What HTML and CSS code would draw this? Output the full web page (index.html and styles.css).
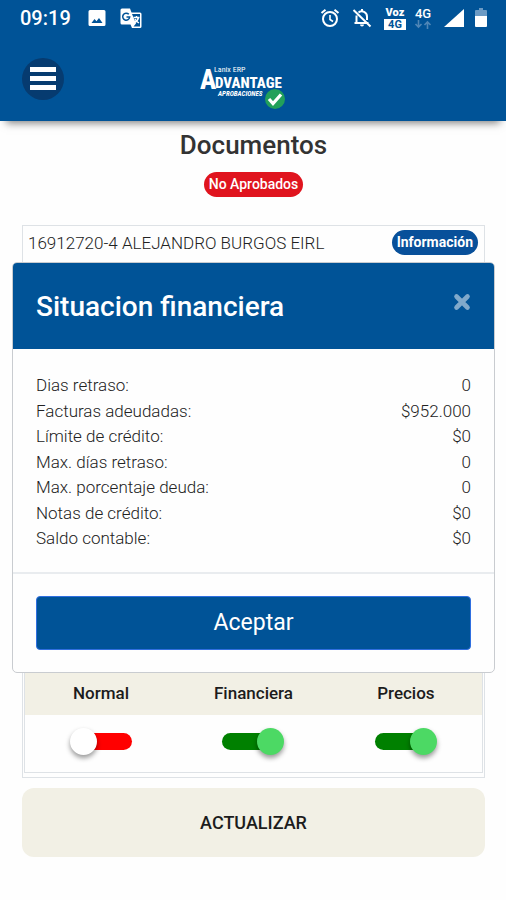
FILE: index.html
```html
<!DOCTYPE html>
<html lang="es">
<head>
  <meta charset="UTF-8" />
  <meta name="viewport" content="width=device-width, initial-scale=1.0"/>
  <title>Advantage Aprobaciones</title>
  <link rel="stylesheet" href="styles.css">
</head>
<body>
  <header class="topbar">
    <!-- Status bar -->
    <div class="status">
      <span class="time">09:19</span>
      <svg class="ic-image" width="18" height="18" viewBox="0 0 18 18"><path fill="#fff" fill-rule="evenodd" d="M2 1h14a1.500 1.500 0 0 1 1.500 1.500v13A1.500 1.500 0 0 1 16 17H2a1.500 1.500 0 0 1-1.500-1.500v-13A1.500 1.500 0 0 1 2 1zM3.500 14h11L11 9l-2.500 3.200-2-2.200z"/></svg>
      <svg class="ic-translate" width="22" height="21" viewBox="0 0 22 21">
        <path fill="#fff" d="M2 .5h8l1.500 4H20a1.500 1.500 0 0 1 1.500 1.500v12.500A1.500 1.500 0 0 1 20 20h-8l-1.500-3.500H2A1.500 1.500 0 0 1 .5 15V2A1.500 1.500 0 0 1 2 .5z"/>
        <path fill="#005397" d="M12 6h8v12.500h-6.500l2.500-3z"/>
        <path fill="none" stroke="#fff" stroke-width="1.400" d="M13.500 9.500h6M16.500 8v1.500M18.500 9.500c-.5 2.500-2 4-4 5M15 11c.8 1.800 2.200 3 4 4"/>
        <path fill="none" stroke="#005397" stroke-width="1.500" d="M8.800 6.300a3.500 3.500 0 1 0 .9 2.700H6.500"/>
      </svg>
      <span class="spacer"></span>
      <svg class="ic-alarm" width="20" height="20" viewBox="0 0 20 20" fill="none" stroke="#fff" stroke-width="2"><circle cx="10" cy="11" r="7"/><path d="M1.500 5l4-3.300M18.500 5l-4-3.300"/><path stroke-width="1.600" d="M10 7v4.500l3 2"/></svg>
      <svg class="ic-bell" width="20" height="20" viewBox="0 0 20 20"><path fill="none" stroke="#fff" stroke-width="2" d="M4.500 7.500v7.500h11M2.500 15h14M6.500 4.500C10 2 15 4 15 8.500v3.500M10 1v3M1.500 2l17 16.500"/><path fill="#fff" d="M8 16.500h4a2 2 0 0 1-4 0z"/></svg>
      <span class="volte"><b>Voz</b><i>4G</i></span>
      <span class="net">4G
        <svg width="18" height="9" viewBox="0 0 18 9" fill="none" stroke="#4f86b6" stroke-width="1.600"><path d="M4.500 0v7M1.500 4l3 3 3-3M13.500 9V2M10.500 5l3-3 3 3"/></svg>
      </span>
      <svg class="ic-signal" width="22" height="20" viewBox="0 0 22 20"><path fill="#fff" d="M21 1v18H1z"/></svg>
      <svg class="ic-battery" width="12" height="20" viewBox="0 0 12 20"><path fill="#6b9ac4" d="M4 0h4v2h3a1 1 0 0 1 1 1v6H0V3a1 1 0 0 1 1-1h3z"/><path fill="#fff" d="M0 8h12v10a1 1 0 0 1-1 1H1a1 1 0 0 1-1-1z"/></svg>
    </div>

    <!-- Menu and logo -->
    <div class="navbar">
      <button class="menu-btn" aria-label="Menú"><span></span><span></span><span></span></button>
      <svg class="logo" width="106" height="60" viewBox="0 0 106 60">
        <text class="logo-small" x="14" y="23">Lanix ERP</text>
        <text class="logo-cap" x="0" y="40">A</text>
        <text class="logo-big" x="15" y="39">DVANTAGE</text>
        <text class="logo-sub" x="18" y="47">APROBACIONES</text>
        <circle cx="75" cy="50" r="10" fill="#22a05a"/>
        <path d="M69 50l4 4.500 8-9" fill="none" stroke="#fff" stroke-width="3.200"/>
      </svg>
    </div>
  </header>

  <main class="content">
    <h1>Documentos</h1>
    <span class="badge badge-red">No Aprobados</span>

    <section class="card">
      <div class="card-head">
        <span>16912720-4 ALEJANDRO BURGOS EIRL</span>
        <button class="badge badge-blue">Información</button>
      </div>
      <table class="approvals">
        <thead>
          <tr>
            <th id="normal">Normal</th>
            <th id="financiera">Financiera</th>
            <th id="precios">Precios</th>
          </tr>
        </thead>
        <tbody>
          <tr>
            <td><input type="checkbox" class="toggle" aria-labelledby="normal"></td>
            <td><input type="checkbox" class="toggle" aria-labelledby="financiera" checked></td>
            <td><input type="checkbox" class="toggle" aria-labelledby="precios" checked></td>
          </tr>
        </tbody>
      </table>
    </section>

    <button class="update-btn">ACTUALIZAR</button>
  </main>

  <!-- Modal -->
  <div class="overlay">
    <div class="modal" role="dialog" aria-labelledby="modalTitle">
      <div class="modal-header">
        <h2 id="modalTitle">Situacion financiera</h2>
        <button class="close-btn" aria-label="Cerrar">
          <svg width="18" height="18" viewBox="0 0 18 18"><path d="M3.500 3.500l11 11M14.500 3.500l-11 11" stroke="#80a9cb" stroke-width="4.600" stroke-linecap="round"/></svg>
        </button>
      </div>
      <dl class="modal-body">
        <div><dt>Dias retraso:</dt><dd>0</dd></div>
        <div><dt>Facturas adeudadas:</dt><dd>$952.000</dd></div>
        <div><dt>Límite de crédito:</dt><dd>$0</dd></div>
        <div><dt>Max. días retraso:</dt><dd>0</dd></div>
        <div><dt>Max. porcentaje deuda:</dt><dd>0</dd></div>
        <div><dt>Notas de crédito:</dt><dd>$0</dd></div>
        <div><dt>Saldo contable:</dt><dd>$0</dd></div>
      </dl>
      <div class="modal-footer">
        <button class="accept-btn">Aceptar</button>
      </div>
    </div>
  </div>
</body>
</html>
```
FILE: styles.css
```css
* {
  box-sizing: border-box;
  margin: 0;
  padding: 0;
}

body {
  position: relative;
  display: flex;
  flex-direction: column;
  min-height: 100vh;
  background: #fefefe;
  color: #222;
  font-family: Roboto, sans-serif;
  font-size: 17px;
}

button {
  border: none;
  font-family: inherit;
  cursor: pointer;
}

/* Header */
.topbar {
  background: #005397;
  box-shadow: 0 8px 8px -6px rgba(0, 0, 0, 0.5);
}

.status {
  display: flex;
  align-items: center;
  height: 36px;
  padding: 0 19px 0 20px;
  color: #fff;
}

.time {
  width: 68px;
  font-size: 20px;
  font-weight: 500;
}

.ic-image {
  margin-right: 14px;
}

.spacer {
  flex: 1;
}

.ic-alarm,
.ic-bell {
  margin-right: 12px;
}

.volte,
.net {
  display: flex;
  flex-direction: column;
  align-items: center;
  font-weight: 700;
}

.volte {
  width: 22px;
  margin-right: 8px;
  font-size: 11px;
  line-height: 12px;
}

.volte b {
  font-weight: 900;
}

.volte i {
  width: 100%;
  background: #fff;
  color: #005397;
  font-style: normal;
  line-height: 11px;
  text-align: center;
}

.net {
  width: 18px;
  margin-right: 11px;
  font-size: 13px;
  font-weight: 500;
  line-height: 13px;
}

.ic-signal {
  margin-right: 10px;
}

.navbar {
  display: grid;
  grid-template-columns: 1fr auto 1fr;
  align-items: center;
  height: 85px;
  padding: 0 22px;
}

.menu-btn {
  display: flex;
  flex-direction: column;
  align-items: center;
  justify-content: center;
  gap: 4px;
  width: 42px;
  height: 42px;
  border-radius: 50%;
  background: #063b70;
}

.menu-btn span {
  width: 26px;
  height: 5px;
  background: #fff;
}

.logo {
  fill: #fff;
  font-family: "Roboto Condensed", Roboto, sans-serif;
}

.logo-small {
  font-size: 8px;
}

.logo-big {
  font-size: 15px;
  font-weight: 800;
}

.logo-cap {
  font-size: 27px;
  font-weight: 800;
}

.logo-sub {
  font-size: 7px;
  font-weight: 700;
  font-style: italic;
}

/* Page */
.content {
  flex: 1;
  display: flex;
  flex-direction: column;
  align-items: center;
  padding: 8px 21px 43px 22px;
}

h1 {
  color: #333;
  font-size: 26px;
  font-weight: 500;
  line-height: 32px;
}

.badge {
  height: 25px;
  padding: 0 5px;
  border-radius: 13px;
  color: #fff;
  font-size: 14px;
  font-weight: 500;
  line-height: 25px;
}

.badge-red {
  margin: 11px 0 28px;
  background: #e0141e;
}

.badge-blue {
  background: #08509a;
  font-weight: 700;
}

.card {
  flex: 1;
  display: flex;
  flex-direction: column;
  justify-content: space-between;
  width: 100%;
  padding: 0 1px 4px;
  border: 1px solid #dee2e6;
}

.card-head {
  display: flex;
  align-items: center;
  justify-content: space-between;
  height: 33px;
  padding: 0 5px 0 4px;
  font-size: 17px;
  font-weight: 300;
}

.approvals {
  width: 100%;
  table-layout: fixed;
  border: 1px solid #dee2e6;
  border-collapse: collapse;
}

.approvals th {
  height: 44px;
  background: #f2f0e5;
  color: #1c1c1c;
  font-size: 17px;
  font-weight: 500;
}

.approvals td {
  height: 58px;
  padding-bottom: 4px;
  text-align: center;
}

.toggle {
  appearance: none;
  position: relative;
  display: inline-block;
  width: 62px;
  height: 27px;
  vertical-align: middle;
  cursor: pointer;
}

.toggle::before {
  content: "";
  display: block;
  width: 48px;
  height: 17px;
  margin: 5px 0 0 14px;
  border-radius: 9px;
  background: #ff0000;
}

.toggle::after {
  content: "";
  position: absolute;
  top: 0;
  left: 0;
  width: 27px;
  height: 27px;
  border-radius: 50%;
  background: #fff;
  box-shadow: 0 3px 5px rgba(0, 0, 0, 0.4);
}

.toggle:checked::before {
  margin-left: 0;
  background: #008000;
}

.toggle:checked::after {
  left: auto;
  right: 0;
  background: #4cd964;
}

.update-btn {
  width: 100%;
  height: 69px;
  margin-top: 10px;
  border-radius: 12px;
  background: #f2f0e5;
  color: #1c1c1c;
  font-size: 18px;
  font-weight: 500;
}

/* Modal */
.overlay {
  position: absolute;
  inset: 0;
  padding: 262px 11px 0 12px;
}

.modal {
  overflow: hidden;
  border: 1px solid #c9ccd0;
  border-radius: 5px;
  background: #fefefe;
}

.modal-header {
  display: flex;
  align-items: center;
  justify-content: space-between;
  height: 86px;
  padding: 0 23px;
  background: #005397;
  color: #fff;
}

h2 {
  font-size: 28px;
  font-weight: 500;
}

.close-btn {
  height: 26px;
  margin-bottom: 8px;
  background: none;
}

.close-btn svg {
  display: block;
}

.modal-body {
  padding: 24px 23px 20px;
  border-bottom: 2px solid #e9ecef;
  font-weight: 300;
  line-height: 1.5;
}

.modal-body div {
  display: flex;
  justify-content: space-between;
}

.modal-footer {
  padding: 22px 23px;
}

.accept-btn {
  width: 100%;
  height: 54px;
  border: 1px solid #2f6fe0;
  border-radius: 4px;
  background: #005397;
  color: #fff;
  font-size: 23px;
}
```
